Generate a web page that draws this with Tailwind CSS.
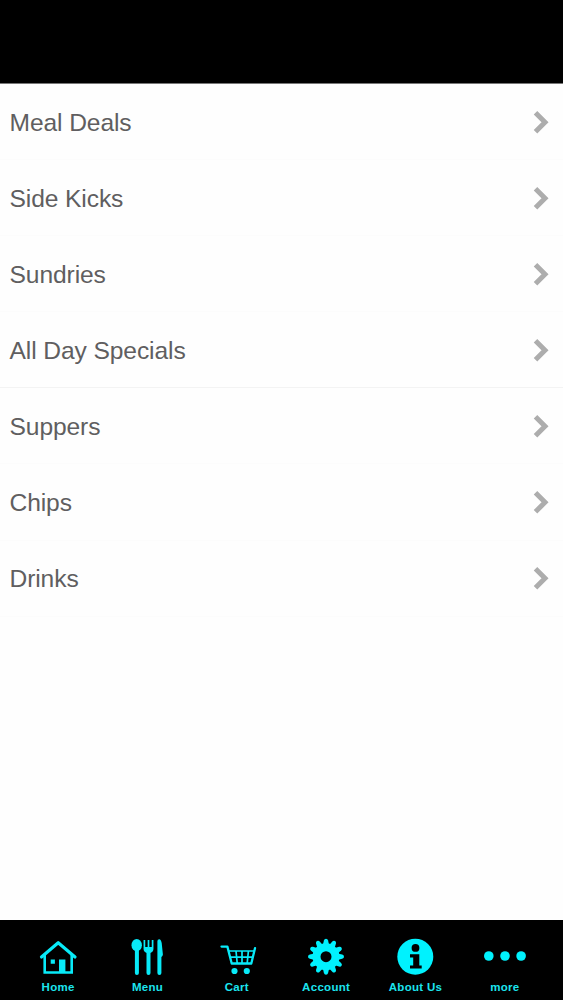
<!DOCTYPE html>
<html lang="en">
<head>
<meta charset="utf-8">
<title>Menu</title>
<script src="https://cdn.jsdelivr.net/npm/@tailwindcss/browser@4"></script>
</head>
<body class="bg-white">
<div class="flex h-[1000px] w-[563px] flex-col overflow-hidden bg-[#fefefe] font-['Liberation_Sans',Arial,sans-serif]">
  <header class="h-[84px] shrink-0 border-b border-[#777] bg-black"></header>
  <main class="flex-1 text-[24.6px] tracking-[-0.1px] text-[#605e60]">
    <ul id="list"></ul>
  </main>
  <nav class="grid h-20 shrink-0 grid-cols-6 bg-black px-[13.5px] pt-[17px] text-[11.5px] leading-[14px] font-bold tracking-[0.3px] text-[#1ce4ee]">
    <a class="flex flex-col items-center gap-[3px]">
      <svg class="size-10" viewBox="0 0 40 40" fill="none" stroke="#08eaf8">
        <path d="M3.500 20 20.200 5.700 37 20" stroke-width="3.200" stroke-linecap="round" stroke-linejoin="round"/>
        <path d="M6.700 18v17.500h27V18" stroke-width="2.600"/>
        <path d="M12.700 22.500h4.200v4.200h-4.200zM21 22.500h6.400V36H21z" fill="#08eaf8" stroke="none"/>
      </svg><span>Home</span></a>
    <a class="flex flex-col items-center gap-[3px]">
      <svg class="size-10" viewBox="0 0 40 40" fill="#08eaf8">
        <ellipse cx="9.700" cy="8.200" rx="5.200" ry="6.200"/>
        <path d="M7.900 12h4v24a2 2 0 0 1-4 0zM19.500 14h4v22a2 2 0 0 1-4 0z"/>
        <path d="M17.400 3v9q0 2.800 4.100 2.800t4.100-2.800V3M21.500 3v12" fill="none" stroke="#08eaf8" stroke-width="1.700"/>
        <path d="M17 10h9v2.500Q25.500 16 21.500 16T17 12.500z"/>
        <path d="M30.400 4.200Q30.400 2.200 32.200 2.200T34.700 6L35.900 17.500Q35.700 19.300 34.400 20V36a2 2 0 0 1-4 0z"/>
      </svg><span>Menu</span></a>
    <a class="flex flex-col items-center gap-[3px]">
      <svg class="size-10" viewBox="0 0 40 40" fill="none" stroke="#08eaf8">
        <path d="M4.500 9.600h5.900L14.700 26.500H34.300L38 11.200" stroke-width="2.300" stroke-linecap="round" stroke-linejoin="round"/>
        <path d="M11.800 14h25.500M13.200 20.200h22.600M19 14l1.200 12M25 14v12M31.400 14l-1.200 12" stroke-width="1.700"/>
        <circle cx="17.500" cy="34" r="3.100" fill="#08eaf8" stroke="none"/><circle cx="29.800" cy="34" r="3.100" fill="#08eaf8" stroke="none"/>
      </svg><span>Cart</span></a>
    <a class="flex flex-col items-center gap-[3px]">
      <svg class="size-10" viewBox="0 0 40 40">
        <circle cx="20" cy="19.700" r="9.500" fill="none" stroke="#00f2fe" stroke-width="8"/>
        <g id="teeth" fill="#00f2fe"></g>
      </svg><span>Account</span></a>
    <a class="flex flex-col items-center gap-[3px]">
      <svg class="size-10" viewBox="0 0 40 40">
        <circle cx="20.300" cy="19.700" r="18" fill="#00f2fe"/>
        <circle cx="20.500" cy="10.900" r="3.900"/>
        <path d="M15 17.200h9.300v11.200h2.400v3.200H15v-3.200h3.200v-8H15z"/>
      </svg><span>About Us</span></a>
    <a class="flex flex-col items-center gap-[3px]">
      <svg class="h-10 w-[44px]" viewBox="-2 0 44 40" fill="#00f2fe">
        <circle cx="3.800" cy="19" r="4.800"/><circle cx="20" cy="19" r="4.800"/><circle cx="36.100" cy="19" r="4.800"/>
      </svg><span>more</span></a>
  </nav>
</div>
<script>
  const items = ['Meal Deals', 'Side Kicks', 'Sundries', 'All Day Specials', 'Suppers', 'Chips', 'Drinks'];
  document.getElementById('list').innerHTML = items.map((name, i) => `
    <li class="flex h-[76.1px] items-center justify-between border-b pl-[9.5px] pr-[13px] ${i === 3 ? 'border-[#f3f3f3]' : 'border-[#fcfcfc]'}">
      <span class="pt-[3px]">${name}</span>
      <svg class="h-6 w-[17px]" viewBox="0 0 17 24" fill="none" stroke="#adadad" stroke-width="5"><path d="M2.500 2.800 12 12.300 2.500 21.800"/></svg>
    </li>`).join('');
  document.getElementById('teeth').innerHTML = Array.from({ length: 12 }, (_, i) =>
    `<path transform="rotate(${i * 30} 20 19.700)" d="M16.800 8.500 17.900 3.500Q18.300 1.700 20 1.700T22.100 3.500L23.200 8.500z"/>`).join('');
</script>
</body>
</html>
